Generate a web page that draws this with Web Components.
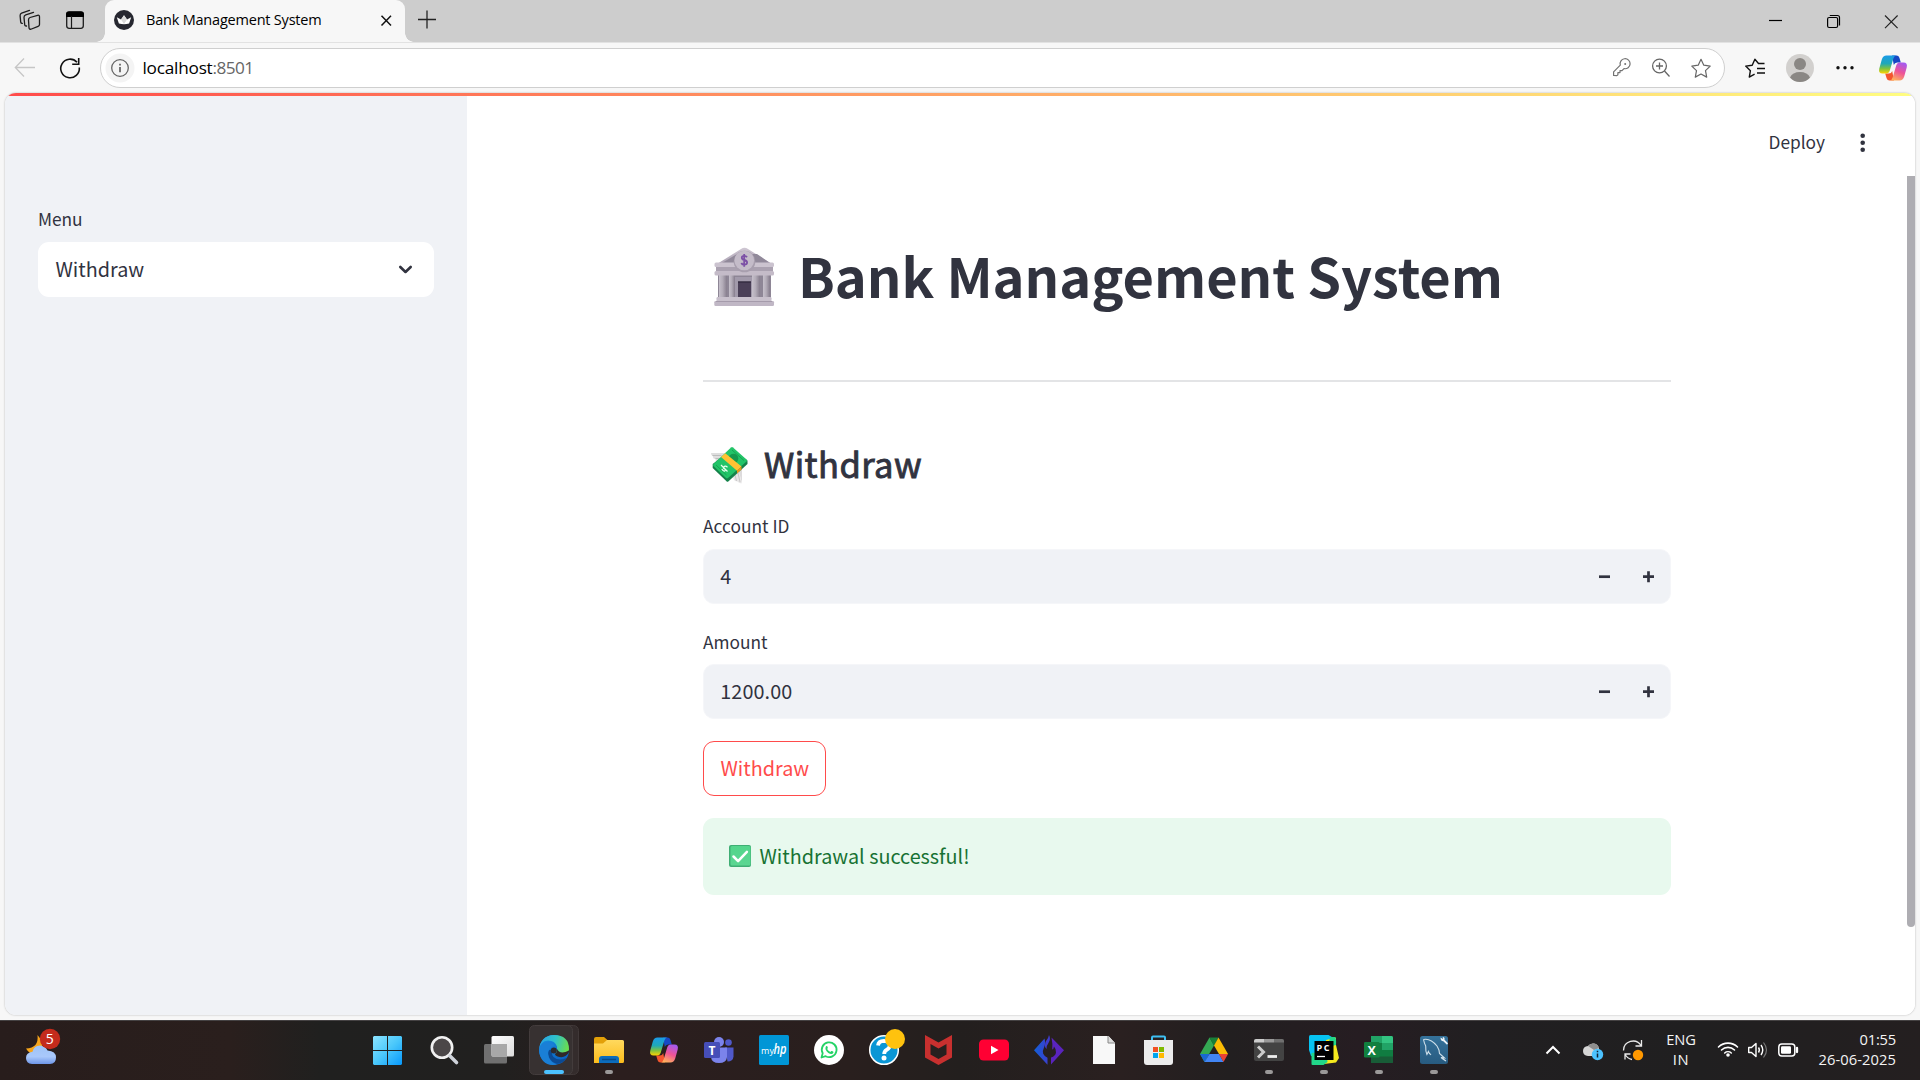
<!DOCTYPE html>
<html lang="en">
<head>
<meta charset="utf-8">
<title>Bank Management System</title>
<style>
html,body{margin:0;padding:0;height:1080px;overflow:hidden;background:#f7f7f7}
body{font-family:"Open Sans","Noto Sans",sans-serif;color:#000}
</style>
</head>
<body>
<desktop-screen></desktop-screen>
<script>
const svg=(x,y,w,h,c)=>`<svg viewBox="${x} ${y} ${w} ${h}" width="${w}" height="${h}" fill="none">${c}</svg>`;
const APP='font-family:"Noto Sans CJK SC","Noto Sans",sans-serif;color:#31333f;';
function define(name,css,html){
  customElements.define(name,class extends HTMLElement{
    constructor(){
      super();
      this.attachShadow({mode:'open'});
    }
    connectedCallback(){
      const body=typeof html==='function'?html(this):html;
      this.shadowRoot.innerHTML=`<style>:host{display:block;box-sizing:border-box}*{box-sizing:border-box}svg{display:block;flex:none}${css}</style>${body}`;
    }
  });
}

/* Inline text whose tracking is set so that it takes the given width. */
customElements.define('fit-text',class extends HTMLElement{
  constructor(){
    super();
    this.attachShadow({mode:'open'}).innerHTML='<style>:host{display:block;white-space:pre;flex:none}span{display:inline-block;white-space:pre}</style><span><slot></slot></span>';
  }
  connectedCallback(){
    requestAnimationFrame(()=>this.fit());
    this.fit();
  }
  fit(){
    const w=parseFloat(this.getAttribute('w')),s=this.shadowRoot.querySelector('span');
    s.style.letterSpacing='0px';
    const n=s.getBoundingClientRect().width;
    if(w&&n)s.style.letterSpacing=((w-n)/this.textContent.length).toFixed(3)+'px';
  }
});

const copilot=(x,y,id)=>`<g transform="translate(${x} ${y})">
<defs><linearGradient id="${id}a" x1="0" y1="0" x2="0" y2="1"><stop offset="0" stop-color="#1b9be8"/><stop offset=".45" stop-color="#1fa8b8"/><stop offset=".72" stop-color="#7cc242"/><stop offset="1" stop-color="#ffd400"/></linearGradient>
<linearGradient id="${id}b" x1="0.7" y1="0" x2=".3" y2="1"><stop offset="0" stop-color="#a45af0"/><stop offset=".5" stop-color="#ee5397"/><stop offset="1" stop-color="#ffb35c"/></linearGradient></defs>
<path d="M13 0h4.500q2.200 0 2.900 2.200L21.800 7h-3.600q-2.600 0-3.400 2.600z" fill="#1648c4"/>
<path d="M15 25H10.500q-2.200 0-2.900-2.200L6.200 18h3.600q2.600 0 3.400-2.600z" fill="#f4562e"/>
<path d="M7.500 0H17q-1.800.4-2.700 3.300L10.800 15q-.9 3-3.600 3H3.600Q-.9 18 .3 13L2.800 4Q4 0 7.500 0z" fill="url(#${id}a)"/>
<path d="M20.500 25H11q1.800-.4 2.700-3.300L17.200 10q.9-3 3.600-3h3.600q4.500 0 3.300 5L25.200 21q-1.200 4-4.700 4z" fill="url(#${id}b)"/></g>`;

define('tab-strip',`
:host{height:42px;background:#cdcdcd;display:flex}
.tab{position:relative;width:300px;height:42px;background:#f7f7f7;border-radius:9px 9px 0 0;display:flex}
.tab:before,.tab:after{content:"";position:absolute;bottom:0;width:9px;height:9px}
.tab:before{left:-9px;background:radial-gradient(circle at 0 0,transparent 8.500px,#f7f7f7 9px)}
.tab:after{right:-9px;background:radial-gradient(circle at 100% 0,transparent 8.500px,#f7f7f7 9px)}
fit-text{font-size:14.500px;line-height:40px;width:222.500px}
.grow{flex:1}`,
svg(0,0,50,42,`<g stroke="#1c1c1c" stroke-width="1.300" stroke-linejoin="round" stroke-linecap="round"><path d="M30 17.500l7.600-2.200q1.900-.5 1.900 1.500v7.600q0 1.400-1.400 1.900l-6.600 2.700q-2.200.8-2.500-1.200l-.5-7.800q0-2 1.500-2.500z"/><path d="M26.500 26q-1.700.2-1.800-1.500l-.7-7q-.1-2 1.700-2.600l7.800-2.600"/><path d="M22.300 23.400q-1.400 0-1.600-1.300l-.6-6.500q-.1-1.900 1.500-2.500l7.900-2.700"/></g>`)
+svg(50,0,55,42,`<rect x="66.700" y="12" width="16.600" height="16.300" rx="2.500" stroke="#1c1c1c" stroke-width="1.300"/><path d="M66 17v-2.500q0-3 3-3h12q3 0 3 3V17z" fill="#000"/><path d="M71.500 16v12" stroke="#1c1c1c" stroke-width="1.200"/>`)
+`<div class="tab">`+svg(105,0,41,42,`<circle cx="124" cy="20" r="10" fill="#262730"/><path d="M116.800 17.300l4.200 2.300 3-4.300 3 4.300 4.200-2.300-2.100 6.200q-5 1.400-10.200 0z" fill="#fff"/><path d="M124 15.300l3 4.300-3 4.500-3-4.500z" fill="#dadada"/>`)
+`<fit-text w="175.500">Bank Management System</fit-text>`+svg(368.5,0,36.5,42,`<path d="M381 15.700l9.500 9.800M390.500 15.700l-9.500 9.800" stroke="#111" stroke-width="1.500"/>`)+`</div>`
+svg(405,0,50,42,`<path d="M418 19.500h18M427 10.500v18" stroke="#222" stroke-width="1.300"/>`)+`<div class="grow"></div>`
+svg(1750,0,50,42,`<path d="M1769 20.500h13" stroke="#000" stroke-width="1.200"/>`)
+svg(1800,0,60,42,`<rect x="1827.600" y="17.500" width="10" height="10" rx="1.500" stroke="#000" stroke-width="1.200"/><path d="M1829.800 15.500h7.700q2 0 2 2v8" stroke="#000" stroke-width="1.200"/>`)
+svg(1860,0,60,42,`<path d="M1885 15.500l12.600 12.600M1897.600 15.500l-12.600 12.600" stroke="#222" stroke-width="1.150"/>`));

define('address-bar',`
:host{height:51px;display:flex;align-items:flex-start;background:#f7f7f7;border-top:1px solid #e2e2e2}
.pill{width:1625px;height:40px;margin-top:5px;border:1.400px solid #cfcfcf;border-radius:20px;background:#fff;display:flex;overflow:hidden}
.url{display:flex;flex:1;font-size:17.200px;line-height:37px;color:#000}
.url .p{color:#666}
.pill svg{margin-top:-1px;height:40px}`,
svg(0,43,50,50,`<path d="M35 67.500H16M24 58.500l-8.700 9 8.700 9" stroke="#c6c6c6" stroke-width="1.300"/>`)
+svg(50,43,50,50,`<path d="M77 62.300A9.300 9.300 0 1 0 79.300 67.500M78.700 58v6.200h-6.500" stroke="#111" stroke-width="1.600"/>`)
+`<div class="pill">`+svg(101,48,41.5,40,`<circle cx="120" cy="68" r="14.500" fill="#f4f4f4"/><circle cx="120" cy="68" r="8.300" stroke="#666" stroke-width="1.300"/><path d="M120 67v5.200M120 63.700v1.800" stroke="#555" stroke-width="1.600"/>`)
+`<div class="url"><fit-text w="70">localhost</fit-text><fit-text class="p" w="41">:8501</fit-text></div>`
+svg(1604,48,39,40,`<path d="M1613.600 75.500v-3.700l6.700-6.700a5 5 0 1 1 3.700 3.500l-2 2h-2v2h-2.100v2.200l-1 .8z" stroke="#727272" stroke-width="1.200" stroke-linejoin="round"/><circle cx="1625.200" cy="64" r="1" fill="#727272"/>`)
+svg(1643,48,37,40,`<circle cx="1659.500" cy="66" r="6.900" stroke="#666" stroke-width="1.300"/><path d="M1664.500 71l5 5.500M1656 66h7M1659.500 62.500v7" stroke="#666" stroke-width="1.300"/>`)
+svg(1680,48,44,40,`<path d="M1701 59.300l2.800 5.900 6.400.9-4.700 4.500 1.200 6.500-5.700-3.100-5.700 3.100 1.200-6.500-4.700-4.500 6.400-.9z" stroke="#666" stroke-width="1.200" stroke-linejoin="round"/>`)+`</div>`
+svg(1725,43,50,50,`<path d="M1764.500 63.500h-6l-3.600-4.300-2.700 6-6.500.9 4.700 4.600-1.100 6.400 5.300-2.900M1757 68.500h8M1757 73h8" stroke="#111" stroke-width="1.400" stroke-linejoin="round"/>`)
+svg(1775,43,50,50,`<circle cx="1800" cy="68" r="14" fill="#d2d0ce"/><circle cx="1800" cy="64" r="6" fill="#8a8784"/><path d="M1790 77.500q2.500-5.500 10-5.500t10 5.500q-4 4.500-10 4.500t-10-4.500z" fill="#8a8784"/>`)
+svg(1825,43,45,50,`<circle cx="1838" cy="67.700" r="1.700" fill="#111"/><circle cx="1845" cy="67.700" r="1.700" fill="#111"/><circle cx="1852" cy="67.700" r="1.700" fill="#111"/>`)
+svg(1870,43,50,50,copilot(1879,55.500,'t')));

define('select-box',`
:host{width:396px;height:55px;border-radius:11px;background:#fff;display:flex;justify-content:space-between;font-size:19.800px;line-height:54px;padding-left:17.500px}`,
`<fit-text w="88"><slot></slot></fit-text>`+svg(384,242,50,55,`<path d="M400.300 267l5.200 5 5.200-5" stroke="#31333f" stroke-width="2.600" stroke-linecap="round" stroke-linejoin="round"/>`));

define('side-bar',`:host{${APP}width:462px;flex:none;background:#f0f2f6;padding:112px 33px 0}
.l{font-size:17.300px;line-height:22px;height:22px;margin-bottom:12px}`,
`<div class="l"><fit-text w="44.500">Menu</fit-text></div><select-box>Withdraw</select-box>`);

define('number-field',`
.l{font-size:17.300px;line-height:22px;height:24px}
.f{margin-top:var(--gap,10px);height:55px;border:1px solid #f5f6f9;border-radius:11px;background:#f0f2f6;display:flex;padding-left:16.300px;font-size:19.800px;line-height:51px}
.g{flex:1}`,
el=>`<div class="l"><fit-text w="${el.getAttribute('lw')}">${el.getAttribute('label')}</fit-text></div><div class="f"><fit-text w="${el.getAttribute('vw')}">${el.getAttribute('value')}</fit-text><div class="g"></div>`
+svg(1583,549,44,53,`<path d="M1599 575.700h11" stroke="#31333f" stroke-width="2.700"/>`)
+svg(1627,549,43,53,`<path d="M1643 575.700h11M1648.500 570.200v11" stroke="#31333f" stroke-width="2.700"/>`)+`</div>`);

define('action-button',`
:host{width:123px;height:55px;border:1px solid #ff4b4b;border-radius:11px;color:#ff4b4b;font-size:19.800px;line-height:51px;padding-left:16.500px}`,
`<fit-text w="88"><slot></slot></fit-text>`);

define('success-alert',`
:host{height:77px;border-radius:11px;background:#e8f9ee;color:#177233;display:flex;font-size:19.800px;line-height:76px;padding-left:26px}
svg{margin-right:8.500px}`,
svg(729,818,22,77,`<defs><linearGradient id="c" x1="0" y1="0" x2="0" y2="1"><stop offset="0" stop-color="#53d58b"/><stop offset="1" stop-color="#5cd692"/></linearGradient></defs><rect x="729" y="845" width="22" height="22" rx="2" fill="#3fae74"/><rect x="730.500" y="846" width="20" height="19.500" rx="1.500" fill="url(#c)"/><path d="M733.500 856.500l4.600 4.600 8.800-9.200" stroke="#fff" stroke-width="2.500" stroke-linecap="round" stroke-linejoin="round"/>`)
+`<fit-text w="208.500"><slot></slot></fit-text>`);

const bank=svg(703,236,95,80,`<defs><linearGradient id="p" x1="0" y1="0" x2="0" y2="1"><stop offset="0" stop-color="#cfc7d3"/><stop offset="1" stop-color="#aca2b3"/></linearGradient><linearGradient id="q"><stop offset="0" stop-color="#c6c0cb"/><stop offset=".45" stop-color="#b3acb8"/><stop offset="1" stop-color="#867d8d"/></linearGradient></defs>
<path d="M718 274h53v24h-53z" fill="#8e8696"/><path d="M732 277h21v20h-21z" fill="#a29aab"/>
<rect x="719" y="274" width="8" height="24" fill="url(#q)"/><rect x="729" y="274" width="6" height="24" fill="url(#q)"/><rect x="752" y="274" width="8" height="24" fill="url(#q)"/><rect x="763" y="274" width="7" height="24" fill="url(#q)"/>
<rect x="738" y="282" width="13" height="15" fill="#4a3f57"/><path d="M738 282h13" stroke="#352d40" stroke-width="1.500"/>
<path d="M717 264l24-15q3.500-2.300 7 0l24 15z" fill="url(#p)"/><path d="M722 263l15-9 20 0 13 9z" fill="#91899a"/>
<rect x="714.500" y="262.500" width="59.500" height="4.500" rx="1.500" fill="#cbc3cf"/><path d="M716 267h57v5h-57z" fill="#aaa1b0"/><rect x="714.500" y="271" width="59.500" height="4.500" rx="1.500" fill="#c4bbc8"/>
<circle cx="744.500" cy="261.500" r="10.800" fill="#a89fae"/><circle cx="744.300" cy="260.500" r="9.800" fill="#c4bcc9"/>
<path d="M747 257.200q-.8-1.400-2.900-1.400-2.300 0-2.300 1.900 0 1.700 2.500 2.300 2.800.7 2.800 2.600 0 2.100-2.700 2.100-2.300 0-3.100-1.700M744.200 254v12.700" stroke="#7c50a6" stroke-width="1.800"/>
<rect x="716.500" y="297" width="55" height="5" rx="1.200" fill="#c8c0cc"/><rect x="714.300" y="301" width="59.700" height="5" rx="1.200" fill="#c0b7c5"/><path d="M716 301.500h56" stroke="#a59bab" stroke-width="1"/>`);
const money=svg(703,430,61,70,`<path d="M711 452h14l-7 9q-3-1-2.500-3-2.500 0-2.500-2.500-2-.5-2-3.500z" fill="#dedede"/><path d="M712.500 454.500h9M715.500 457.500h5" stroke="#bdbdbd"/><path d="M738 467l3.500 14v1.500q-3-.3-4-2-3 0-4-2.500-.7-2 0-5z" fill="#e7e6e6"/><path d="M738 468l4-2v16z" fill="#dddbdc"/><path d="M735 474l1.500 6M738 472l2 9" stroke="#c9c7c8"/>
<path d="M732 448L747.500 459.500v3.500L728 480.700h-1L712.700 467v-4z" fill="#14824a"/>
<path d="M731 446.500q1-.8 2 0l13.500 12q1 1 0 2L728 477q-1 .8-2 0l-12.500-12q-1-1 0-2z" fill="#22c468"/><circle cx="733.500" cy="457.500" r="4.800" fill="#14994c"/><path d="M732 449l12 10.500M716 464l10.500 10" stroke="#16a553" stroke-width="1"/>
<path d="M721 456l4.300-3.800 16.200 13.300-4.500 4.300z" fill="#ffc233"/><path d="M737 469.500l4.500-4v3l-4.500 4z" fill="#e99a1b"/><path d="M727.500 466.300q-2.400-2-3.700-.4-.9 1.500.7 2 1.800.6.300 2-1.500.6-3-1.700M721 464l6.500 6.500" stroke="#e8fff0" stroke-width="1.200"/>`);

define('app-main',`:host{${APP}flex:1;background:#fff;display:flex;flex-direction:column}
.top{height:80px;display:flex;justify-content:flex-end;font-size:17.300px;line-height:92px}
.top fit-text{margin-right:1px}
.body{display:flex;height:839px;justify-content:space-between}
.col{width:968px;margin-left:236px;padding-top:60px}
.h1{display:flex;height:80px;font-size:54.200px;font-weight:700;line-height:78px}
hr{border:0;height:2px;background:#e3e4e6;margin:64px 0 49px}
.h2{display:flex;height:70px;font-size:34.500px;line-height:65px;-webkit-text-stroke:.9px #31333f;margin-bottom:14px}
number-field{margin-bottom:22px}
number-field+number-field{--gap:9px;margin-top:27px}
success-alert{margin-top:22px}
.sb{width:8px;height:751px;background:#aeadb2;border-radius:0 0 4px 4px}`,
`<div class="top"><fit-text w="56.500">Deploy</fit-text>`+svg(1826,96,89,80,`<circle cx="1862.700" cy="135.800" r="2.300" fill="#31333f"/><circle cx="1862.700" cy="142.800" r="2.300" fill="#31333f"/><circle cx="1862.700" cy="149.800" r="2.300" fill="#31333f"/>`)+`</div>
<div class="body"><div class="col"><div class="h1">${bank}<fit-text w="705">Bank Management System</fit-text></div><hr>
<div class="h2">${money}<fit-text w="158">Withdraw</fit-text></div>
<number-field label="Account ID" lw="86.500" value="4" vw="11"></number-field>
<number-field label="Amount" lw="64.500" value="1200.00" vw="72"></number-field>
<action-button>Withdraw</action-button><success-alert>Withdrawal successful!</success-alert></div><div class="sb"></div></div>`);

define('page-frame',`
:host{margin:0 5px;height:922px;border-radius:11px;overflow:hidden;box-shadow:0 0 2px #aaa;background:#fff}
.bar{height:3px;background:linear-gradient(90deg,#ff4b4b,#fffd80)}
.row{display:flex;height:919px}`,
`<div class="bar"></div><div class="row"><side-bar></side-bar><app-main></app-main></div>`);

const pip=x=>`<rect x="${x-4}" y="1070" width="8" height="4" rx="2" fill="#9b9999"/>`;
const icons=[
`<defs><linearGradient id="w" x1="0" y1="0" x2="1" y2="1"><stop offset="0" stop-color="#8ce4ff"/><stop offset=".5" stop-color="#4bc8fb"/><stop offset="1" stop-color="#0798fb"/></linearGradient></defs><path d="M374 1036h13v14h-14v-13zM388 1036h13l1 1v13h-14zM373 1051h14v14h-13l-1-1zM388 1051h14v13l-1 1h-13z" fill="url(#w)"/>`,
`<circle cx="442" cy="1047.500" r="10.200" fill="#4b4748" stroke="#f1f1f1" stroke-width="2.600"/><path d="M450 1056l6.500 6.500" stroke="#cfd3da" stroke-width="3.600" stroke-linecap="round"/>`,
`<defs><linearGradient id="v" x1="0" y1="0" x2="1" y2="1"><stop offset="0" stop-color="#fff"/><stop offset="1" stop-color="#dcdcdc"/></linearGradient></defs><rect x="484" y="1044" width="23" height="19.500" rx="1.500" fill="#707070"/><rect x="491.500" y="1036" width="22.500" height="20.500" rx="1.500" fill="url(#v)"/><path d="M491.500 1044H507v12.500h-14q-1.500 0-1.500-1.500z" fill="#a8a8a8"/>`,
`<defs><linearGradient id="e1" x1="0" y1=".3" x2="1" y2=".5"><stop offset="0" stop-color="#2aa3e4"/><stop offset=".5" stop-color="#2fc1cb"/><stop offset="1" stop-color="#6cdf4a"/></linearGradient><linearGradient id="e2" x1="0" y1="0" x2=".6" y2="1"><stop offset="0" stop-color="#1a93e2"/><stop offset="1" stop-color="#0a62c4"/></linearGradient></defs>
<rect x="533.500" y="1025.500" width="45" height="49" rx="5" fill="#342c2c" stroke="#403838"/><rect x="529.500" y="1025.500" width="43" height="49" rx="5" fill="#373131" stroke="#433c3c"/>
<circle cx="554" cy="1050" r="15" fill="url(#e2)"/><path d="M548 1052q0 9 8 11.500 6 1.200 10.500-5.500-8 3.500-13-1-2.500-3-1-7-4-1-4.500 2z" fill="#0b4a94"/><path d="M539 1050q1-9 9-9.500 7 0 9 6 .8 3-1.500 6.500 1.500 2.500 6 2.500 7-1 7.500-6 0-14.500-15-14.500-13.500.5-15 15z" fill="url(#e1)"/><path d="M539 1050q2-8 9-7.700 5 .3 6.500 3.200-6.500 2-6.500 8.500 1 8 9 10.500-16 3-18-14.500z" fill="#1a7fd6"/><path d="M569 1052q-3 6-9.500 5-4.500-.8-4.500-3 2.500-2 1.800-5.500 3 7 12.200 2z" fill="#302929"/><circle cx="553.800" cy="1050.500" r="3" fill="#2c2b30"/>
<rect x="544" y="1070" width="20" height="4" rx="2" fill="#4cc2ff"/>`,
`<defs><linearGradient id="f" x1="0" y1="0" x2="0" y2="1"><stop offset="0" stop-color="#ffd95e"/><stop offset="1" stop-color="#fcbc1c"/></linearGradient></defs><path d="M594 1039q0-2 2-2h8l4 3.500h14v8h-28z" fill="#e3a008"/><path d="M594 1043.500h9l4-3.500h15.500q1.500 0 1.500 1.500v20q0 1.500-1.500 1.500H594z" fill="url(#f)"/><path d="M599 1063v-4q0-3 3-3h14q3 0 3 3v4z" fill="#0c6cbc"/><path d="M602 1059.500h14" stroke="#084a88" stroke-width="1.500"/>`+pip(609),
`<g>${copilot(650,1037.5,'k')}</g>`,
`<circle cx="719" cy="1042" r="5" fill="#7b83eb"/><circle cx="728.500" cy="1042.500" r="3.300" fill="#5059c9"/><path d="M725 1047.500h8.500v9q-.5 5-6 5z" fill="#5059c9"/><path d="M711 1047.500h16v9.500q-.5 6-8 6t-8-6z" fill="#7b83eb"/><rect x="704" y="1042" width="16" height="16" rx="1.500" fill="#464eb8"/><text x="712" y="1054.500" text-anchor="middle" font-size="12" font-weight="700" fill="#fff">T</text>`,
`<rect x="759" y="1035" width="30" height="30" rx="1.500" fill="#0096d6"/><text x="761" y="1053.500" font-size="9" fill="#fff" textLength="13">my</text><text x="773.500" y="1054" font-size="14" font-style="italic" font-weight="600" fill="#fff" textLength="13" lengthAdjust="spacingAndGlyphs">hp</text>`,
`<circle cx="829" cy="1050" r="15" fill="#fff"/><path d="M821.500 1057.500l1.200-4.200a7.400 7.400 0 1 1 2.900 2.900z" stroke="#25d366" stroke-width="1.800" stroke-linejoin="round"/><path d="M826 1046.300q1.200-.8 1.600.8.700 1.200-.4 1.900 1 2 3.200 2.900.7-1.200 1.700-.8 1.800.6 1.300 1.700-1.500 2.300-5.100.1-4.200-3.200-2.300-6.600z" fill="#25d366"/>`,
`<circle cx="884" cy="1050" r="14.300" fill="#0a96d5" stroke="#fff" stroke-width="1.500"/><path d="M878 1045.500q.6-4.700 5.800-4.700 6 .2 6 4.700 0 2.500-3.200 4.400-2.400 1.500-2.400 4" stroke="#fff" stroke-width="3.800"/><circle cx="884" cy="1058" r="2.500" fill="#fff"/><circle cx="895" cy="1039" r="10" fill="#ffc20e"/>`,
`<path d="M925 1035l13.500 7.500L952 1035v22.500l-13.500 7.500-13.500-7.500z" fill="#c8302f"/><path d="M930.500 1044l8 4.500 8-4.500v10.500l-8 4.500-8-4.500z" fill="#26201f"/>`,
`<rect x="979" y="1039.500" width="30" height="21" rx="4.500" fill="#ff0033"/><path d="M991 1045.700v8.600l7.500-4.300z" fill="#fff"/>`,
`<defs><linearGradient id="g"><stop offset="0" stop-color="#1260d8"/><stop offset="1" stop-color="#3a40cc"/></linearGradient></defs><path d="M1044.500 1038.500q1.500 5-.5 9-1.800 3.500-.8 6.300 1 2.400 4.300 4v7L1034 1050.200z" fill="url(#g)"/><path d="M1049 1035q2.300 4-.8 8.500-2.200 2.700-1.700 5.500-3-3-.5-8 2.500-3 3-6z" fill="#3f3ccb"/><path d="M1051.500 1037.500L1064 1050.200 1051 1064.500v-7q4.500-1.500 5-5 .3-3.500-2-6-.3 2.500-1.800 3 .6-6-.7-12z" fill="#5a24bd"/>`,
`<path d="M1093 1036h15.500l6.500 7v21h-22z" fill="#f8f8f8"/><path d="M1108 1036v7h7" fill="#ddd" stroke="#888"/>`,
`<path d="M1152 1042v-4.500q0-1 1-1h11q1 0 1 1v4.500" stroke="#3ec0f3" stroke-width="2"/><path d="M1144 1040h29v22q0 3-3 3h-23q-3 0-3-3z" fill="#ececec"/><path d="M1153 1047h5v5h-5z" fill="#f25022"/><path d="M1159 1047h5v5h-5z" fill="#7fba00"/><path d="M1153 1053h5v5h-5z" fill="#00a4ef"/><path d="M1159 1053h5v5h-5z" fill="#ffb900"/>`,
`<path d="M1209.500 1037.500L1200 1054l4.500 8 9.500-16.500z" fill="#34a853"/><path d="M1209.500 1037.500h9L1214 1046z" fill="#188038"/><path d="M1218.500 1037.500L1228 1054h-9l-5-8.500z" fill="#fbbc04"/><path d="M1200 1054h9.500l-5 8z" fill="#1967d2"/><path d="M1209.500 1054h9.500l4.500 8h-19z" fill="#4285f4"/><path d="M1219 1054h9l-4.500 8z" fill="#ea4335"/>`,
`<rect x="1254" y="1039" width="30" height="22" rx="2" fill="#434343"/><path d="M1254 1042.500V1041q0-2 2-2h8v3.500z" fill="#ccc"/><path d="M1264 1039h10v3.500h-10z" fill="#999"/><path d="M1274 1039h8q2 0 2 2v1.500h-10z" fill="#707070"/><path d="M1258 1046.500l5.500 5.500-5.500 5.500" stroke="#ccc" stroke-width="3"/><path d="M1267.500 1056.500h9.500" stroke="#eee" stroke-width="2.800"/>`+pip(1269),
`<path d="M1309 1036.500q0-1.500 1.500-1.500h18l5 3-6 20-16.500-2-2-6z" fill="#07c3f2"/><path d="M1326 1040l10-2.500v7.500l3 13-3 4.500-12 1.500z" fill="#f5e91e"/><path d="M1330 1037h5q1.500 1.500 1 8l-8 2z" fill="#21d789"/><path d="M1311.500 1053l15-1 1 10-4 3h-11q-1 0-1-1z" fill="#21d789"/><rect x="1314.500" y="1041" width="19" height="19" fill="#000"/><text x="1316.500" y="1050.500" font-size="9" font-weight="700" fill="#fff" textLength="13">PC</text><path d="M1317 1056.500h8" stroke="#fff" stroke-width="1.300"/>`+pip(1324),
`<rect x="1371" y="1036" width="22" height="27" rx="1.500" fill="#107c41"/><path d="M1371 1036h11v7h-11z" fill="#21a366"/><path d="M1382 1036h9.500q1.500 0 1.500 1.500v5.500h-11z" fill="#33c481"/><path d="M1382 1043h11v7h-11z" fill="#21a366"/><path d="M1371 1056.500h22v5q0 1.500-1.500 1.500H1371z" fill="#185c37"/><rect x="1364" y="1042" width="15.500" height="15.500" rx="1.200" fill="#11803f"/><text x="1371.700" y="1054.500" text-anchor="middle" font-size="12.500" font-weight="700" fill="#fff">X</text>`+pip(1379),
`<defs><linearGradient id="m" x1="0" y1="0" x2="0" y2="1"><stop offset="0" stop-color="#35729b"/><stop offset="1" stop-color="#285b80"/></linearGradient></defs><rect x="1420" y="1036" width="28" height="28" rx="2.500" fill="url(#m)"/><path d="M1423.500 1039.500q7-1.500 13.500 6.500 2.300 3.500 2.500 7.500l5 4.500-3.500-.5q2 1.500 5 3.500M1423.500 1039.500q.8 4 2.200 6.500-.2 5.500 1.200 8.500 1-2 1.500-3 1 2.800 2.700 3.300" stroke="#cfe0ea" stroke-width="1.100"/><path d="M1440.500 1037.500q0 3.500 2.800 3.700l3.700 3.500 1-1.500-3.500-3.500q.5-2.500-1.800-2.700l.3 2z" fill="#eef4f8"/>`+pip(1434)
];

define('task-bar',`
:host{height:60px;display:flex;color:#f4f4f4;font-size:14.700px;line-height:20px;
background:linear-gradient(90deg,#281d1c 0,#2a1f1d 230px,#20201f 320px,#21201f 500px,#2b1e1e 620px,#291f1e 850px,#231f1e 960px,#2a2020 1120px,#221f20 1230px,#261d22 1360px,#211f21 1480px,#201f20 1700px,#241f20 100%);box-shadow:inset 0 1px #454243}
text{font-family:"Open Sans",sans-serif}
.apps{display:flex;width:1045px;margin-left:288px}
.tray{display:flex;flex:1;justify-content:flex-end}
.txt{padding-top:9px;display:flex;flex-direction:column}
.lang{width:42px;align-items:center}
.clock{align-items:flex-end;width:89px;margin-right:24px}`,
svg(0,1020,73,60,`<defs><linearGradient id="cl" x1="0" y1="0" x2="0" y2="1"><stop offset="0" stop-color="#9fc4f7"/><stop offset=".6" stop-color="#a9c8fb"/><stop offset="1" stop-color="#6e96e8"/></linearGradient></defs><path d="M37.500 1035q8 8 2.500 18-9 4-14-4.500 13-.5 11.500-13.500z" fill="#f7a61c"/><path d="M32 1064q-6-.5-6-6t6.500-6.200Q34 1045.500 40 1045.500q5.500.3 7.500 5 8.500.5 8.500 7t-6 6.500z" fill="url(#cl)"/><circle cx="50" cy="1039" r="10.200" fill="#c42b1c"/><text x="49.700" y="1044.200" text-anchor="middle" font-size="14" fill="#fff">5</text>`)
+`<div class="apps">${icons.map((c,i)=>svg(361+55*i,1020,55,60,c)).join('')}</div><div class="tray">`
+svg(1530,1020,40,60,`<path d="M1546.500 1053.500l6.500-6.500 6.500 6.500" stroke="#fff" stroke-width="2"/>`)
+svg(1570,1020,45,60,`<path d="M1588 1056q-5-.3-5-5t5-5q2-3 6-2.500 4 .5 5 5l-3 7.500z" fill="#d5d5d5"/><path d="M1588 1046q2-3 6-2.500 4 .5 5 4.500l-5 2z" fill="#8f8f8f"/><circle cx="1597.500" cy="1054.500" r="5.700" fill="#4cc2ff"/><path d="M1597.500 1053.500v4M1597.500 1050.700v1.600" stroke="#123" stroke-width="1.500"/>`)
+svg(1615,1020,45,60,`<path d="M1623.500 1050.500a9.500 9.500 0 0 1 17.500-5M1641.500 1040v6h-6M1625 1059.500v-5.500h5.500M1625 1054q2 4.500 7 5.500" stroke="#e9e9e9" stroke-width="1.300"/><circle cx="1638" cy="1055" r="5.200" fill="#ff9800"/>`)
+`<div class="txt lang"><fit-text w="29.500">ENG</fit-text><fit-text w="16.500">IN</fit-text></div>`
+svg(1702,1020,41,60,`<g stroke="#fff" stroke-width="1.600" stroke-linecap="round"><path d="M1718.500 1047a13.500 13.500 0 0 1 19 0M1721.500 1050a9.300 9.300 0 0 1 13 0M1724.700 1053a4.900 4.900 0 0 1 6.600 0"/></g><circle cx="1728" cy="1055" r="1.800" fill="#fff"/>`)
+svg(1743,1020,30,60,`<path d="M1748.700 1047.500h2.800l4.500-4v13l-4.500-4h-2.800zM1758.500 1047.500q1.700 2.500 0 5M1761 1045q3.500 5 0 10" stroke="#fff" stroke-width="1.400" stroke-linejoin="round"/><path d="M1763.500 1042.500q6 7.500 0 15" stroke="#777" stroke-width="1.200"/>`)
+svg(1773,1020,34,60,`<rect x="1778.800" y="1044" width="16" height="12" rx="3" stroke="#fff" stroke-width="1.500"/><rect x="1781" y="1046.200" width="10" height="7.600" rx="1.200" fill="#fff"/><path d="M1797 1048v4" stroke="#fff" stroke-width="2.300" stroke-linecap="round"/>`)
+`<div class="txt clock"><fit-text w="36.500">01:55</fit-text><fit-text w="77.500">26-06-2025</fit-text></div></div>`);

define('desktop-screen',`:host{width:1920px;height:1080px;display:flex;flex-direction:column;background:#f7f7f7}
page-frame{margin-bottom:5px;flex:none}tab-strip,address-bar,task-bar{flex:none}`,
`<tab-strip></tab-strip><address-bar></address-bar><page-frame></page-frame><task-bar></task-bar>`);
</script>
</body>
</html>
